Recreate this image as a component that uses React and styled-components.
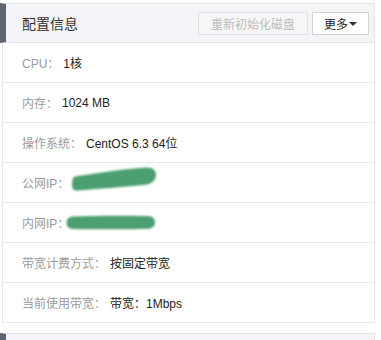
import React from "react";
import styled, { createGlobalStyle } from "styled-components";

const Global = createGlobalStyle`
  html, body { margin: 0; padding: 0; background: #fff; }
  body {
    font-family: "Liberation Sans", "Noto Sans CJK SC", sans-serif;
    -webkit-font-smoothing: antialiased;
  }
`;

const Page = styled.div`
  padding-top: 3px;
  width: 375px;
  display: flex;
  flex-direction: column;
  gap: 10px;
`;

const Panel = styled.section`
  display: flex;
  flex-direction: column;
`;

const Header = styled.header`
  height: 38px;
  display: flex;
  align-items: center;
  justify-content: space-between;
  background: #f3f4f8;
  border-top: 1px solid #e1e3e9;
  border-bottom: 1px solid #e3e5ea;
  border-right: 1px solid #e3e5ea;
  border-left: 6px solid #5e656f;
  padding: 0 5px 0 16px;
`;

const Title = styled.h2`
  margin: 0;
  font-size: 14px;
  font-weight: normal;
  color: #333;
  letter-spacing: 0;
`;

const Actions = styled.div`
  display: flex;
  gap: 4px;
  align-items: center;
`;

const Button = styled.button`
  height: 23px;
  box-sizing: border-box;
  padding: 0 ${(p) => (p.$disabled ? "12px" : "11px")};
  font-family: inherit;
  font-size: 12px;
  border-radius: 0;
  display: flex;
  align-items: center;
  gap: 1px;
  cursor: ${(p) => (p.$disabled ? "default" : "pointer")};
  color: ${(p) => (p.$disabled ? "#bdbdbd" : "#222")};
  background: ${(p) => (p.$disabled ? "#f6f6f6" : "#fff")};
  border: 1px solid ${(p) => (p.$disabled ? "#e2e2e2" : "#d4d4d4")};
`;

const Caret = styled.span`
  display: inline-block;
  width: 0;
  height: 0;
  border-left: 4px solid transparent;
  border-right: 4px solid transparent;
  border-top: 4px solid #333;
  margin-top: 2px;
`;

const Body = styled.div`
  margin-left: 2px;
  border-left: 1px solid #e8e8e8;
  border-right: 1px solid #e8e8e8;
`;

const Row = styled.div`
  height: 39px;
  border-bottom: 1px solid #e8e8e8;
  display: flex;
  align-items: center;
  padding-left: 19px;
  font-size: 12px;
`;

const Label = styled.span`
  color: #9a9a9a;
`;

const Value = styled.span`
  color: #222;
  margin-left: 4px;
`;

const Redact = styled.svg`
  display: block;
  overflow: visible;
  margin-left: ${(p) => p.$offset}px;
  margin-bottom: ${(p) => p.$lift || 0}px;
`;

const GREEN = "#4b9f6f";

const PublicIp = () => (
  <Redact $offset={2} $lift={7} width="90" height="26" viewBox="0 0 90 26">
    <defs>
      <filter id="b1" x="-10%" y="-40%" width="120%" height="180%">
        <feGaussianBlur stdDeviation="0.9" />
      </filter>
    </defs>
    <path
      d="M4 10.5 C20 8 45 4 74 1.5 C82 0.8 85 4 85 9 C85 14 81 17.5 76 18.5 C55 21 25 23 7 24.5 C2 25 0.5 22 1 17 C1.5 13 2 11 4 10.5 Z"
      fill={GREEN}
      filter="url(#b1)"
    />
  </Redact>
);

const PrivateIp = () => (
  <Redact $offset={-3} width="90" height="15" viewBox="0 0 90 15">
    <defs>
      <filter id="b2" x="-10%" y="-50%" width="120%" height="200%">
        <feGaussianBlur stdDeviation="0.9" />
      </filter>
    </defs>
    <path
      d="M7 1.5 C30 0.5 60 0.5 82 1 C87 1.2 89 4 89 7.5 C89 11 86.5 13.5 82 13.8 C60 14.5 30 14.5 7 14 C2.5 13.8 0.5 11 0.5 7.8 C0.5 4.5 2.5 1.7 7 1.5 Z"
      fill={GREEN}
      filter="url(#b2)"
    />
  </Redact>
);

const rows = [
  { label: "CPU：", value: "1核" },
  { label: "内存：", value: "1024 MB" },
  { label: "操作系统：", value: "CentOS 6.3 64位" },
  { label: "公网IP：", node: <PublicIp /> },
  { label: "内网IP：", node: <PrivateIp /> },
  { label: "带宽计费方式：", value: "按固定带宽" },
  { label: "当前使用带宽：", value: "带宽：1Mbps" },
];

export default function App() {
  return (
    <>
      <Global />
      <Page>
        <Panel>
          <Header>
            <Title>配置信息</Title>
            <Actions>
              <Button $disabled disabled>重新初始化磁盘</Button>
              <Button>
                更多<Caret />
              </Button>
            </Actions>
          </Header>
          <Body>
            {rows.map((r) => (
              <Row key={r.label}>
                <Label>{r.label}</Label>
                {r.node ? r.node : <Value>{r.value}</Value>}
              </Row>
            ))}
          </Body>
        </Panel>
        <Panel>
          <Header />
        </Panel>
      </Page>
    </>
  );
}
